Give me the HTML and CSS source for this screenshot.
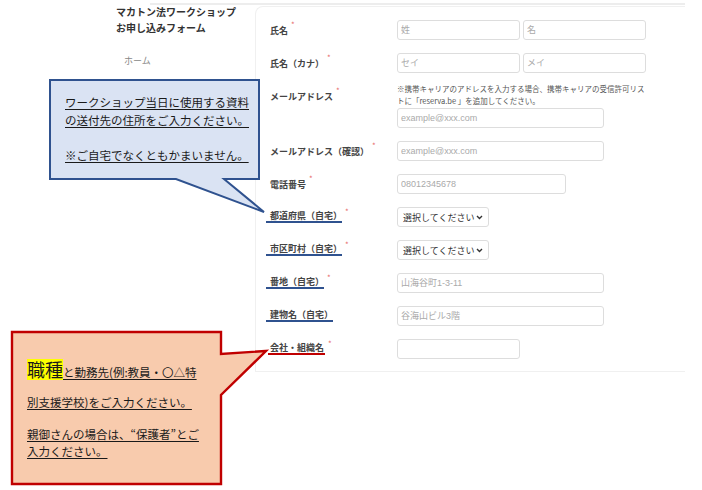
FILE: index.html
```html
<!DOCTYPE html>
<html lang="ja">
<head>
    <meta charset="UTF-8">
    <title>マカトン法ワークショップ お申し込みフォーム</title>
    <link rel="stylesheet" href="styles.css">
</head>
<body>
    <div class="topline"></div>
    <div class="page">
        <aside class="side">
            <div class="title">マカトン法ワークショップ<br>お申し込みフォーム</div>
            <div class="home">ホーム</div>
        </aside>

        <form class="card">
            <div class="row">
                <div class="lbl">氏名<span class="req">*</span></div>
                <div class="fields">
                    <input class="input w123" placeholder="姓">
                    <input class="input w123" placeholder="名">
                </div>
            </div>
            <div class="row">
                <div class="lbl">氏名（カナ）<span class="req">*</span></div>
                <div class="fields">
                    <input class="input w123" placeholder="セイ">
                    <input class="input w123" placeholder="メイ">
                </div>
            </div>
            <div class="row">
                <div class="lbl">メールアドレス<span class="req">*</span></div>
                <div>
                    <p class="hint">※携帯キャリアのアドレスを入力する場合、携帯キャリアの受信許可リス<br>トに「reserva.be 」を追加してください。</p>
                    <input class="input w207" placeholder="example@xxx.com">
                </div>
            </div>
            <div class="row">
                <div class="lbl">メールアドレス（確認）<span class="req">*</span></div>
                <div><input class="input w207" placeholder="example@xxx.com"></div>
            </div>
            <div class="row">
                <div class="lbl">電話番号<span class="req">*</span></div>
                <div><input class="input w169" placeholder="08012345678"></div>
            </div>
            <div class="row">
                <div class="lbl"><span class="mark">都道府県（自宅）</span><span class="req">*</span></div>
                <div class="select"><span>選択してください</span><svg width="7" height="5" viewBox="0 0 7 5"><path d="M1 1l2.5 2.5L6 1" fill="none" stroke="#333" stroke-width="1.4"/></svg></div>
            </div>
            <div class="row">
                <div class="lbl"><span class="mark">市区町村（自宅）</span><span class="req">*</span></div>
                <div class="select"><span>選択してください</span><svg width="7" height="5" viewBox="0 0 7 5"><path d="M1 1l2.5 2.5L6 1" fill="none" stroke="#333" stroke-width="1.4"/></svg></div>
            </div>
            <div class="row">
                <div class="lbl"><span class="mark">番地（自宅）</span><span class="req">*</span></div>
                <div><input class="input w207" placeholder="山海谷町1-3-11"></div>
            </div>
            <div class="row">
                <div class="lbl"><span class="mark">建物名（自宅）</span></div>
                <div><input class="input w207" placeholder="谷海山ビル3階"></div>
            </div>
            <div class="row">
                <div class="lbl"><span class="mark red">会社・組織名</span><span class="req">*</span></div>
                <div><input class="input w123"></div>
            </div>
        </form>
    </div>

    <!-- 吹き出し -->
    <svg class="callouts" width="702" height="490" viewBox="0 0 702 490">
        <path d="M50 80H259V179H224L264 212L176 179H50Z" fill="#dae3f3" stroke="#2f528f" stroke-width="2"/>
        <path d="M12 332H221V354L266 351L221 395V484H12Z" fill="#f8cbad" stroke="#c00000" stroke-width="2.4"/>
    </svg>
    <div class="note-blue">
        ワークショップ当日に使用する資料<br>
        の送付先の住所をご入力ください。<br>
        <br>
        ※ご自宅でなくともかまいません。
    </div>
    <div class="note-red">
        <p class="p1"><span class="hl">職種</span><u>と勤務先(例:教員・〇△特</u><br><u>別支援学校)をご入力ください。</u></p>
        <p class="p2"><u>親御さんの場合は、“保護者”とご</u><br><u>入力ください。</u></p>
    </div>
</body>
</html>
```

FILE: styles.css
```css
body{
    margin: 0;
    position: relative;
    width: 702px;
    height: 490px;
    overflow: hidden;
    background: #fff;
    font-family: "Liberation Sans", "Noto Sans CJK JP", sans-serif;
    color: #333;
}
.topline{
    margin: 3px 0 0 150px;
    width: 535px;
    height: 2px;
    background: #ededed;
}
.page{
    display: flex;
    margin-top: 1px;
}
.side{
    width: 255px;
    box-sizing: border-box;
    padding-left: 116px;
    font-family: "Noto Sans CJK JP", sans-serif;
}
.title{
    margin-top: -2px;
    font-size: 10px;
    font-weight: bold;
    line-height: 16px;
    color: #333;
    white-space: nowrap;
}
.home{
    margin: 19px 0 0 8px;
    font-size: 9px;
    line-height: 12px;
    color: #888;
}
.card{
    width: 430px;
    box-sizing: border-box;
    margin: 0;
    padding: 13px 0 12px 14px;
    border: 1px solid #f0f0f0;
    border-right: 0;
    border-top-left-radius: 8px;
}
.row{
    display: grid;
    grid-template-columns: 127px auto;
    align-items: start;
    margin-bottom: 13px;
}
.row:last-child{
    margin-bottom: 0;
}
.lbl{
    display: flex;
    align-items: center;
    height: 20px;
    font-family: "Noto Sans CJK JP", sans-serif;
    font-size: 9px;
    font-weight: bold;
    color: #444;
    white-space: nowrap;
}
.req{
    align-self: flex-start;
    margin: 1px 0 0 3px;
    font-size: 8px;
    line-height: 8px;
    font-weight: normal;
    color: #e86b6b;
}
.mark{
    margin-left: -4px;
    padding: 0 0 0 4px;
    line-height: 10px;
    border-bottom: 2px solid #2f528f;
}
.mark.red{
    margin-left: -2px;
    padding: 0 1px 0 2px;
    border-bottom-color: #c00000;
}
.fields{
    display: flex;
    gap: 3px;
}
.hint{
    margin: -3px 0 1px;
    font-family: "Noto Sans CJK JP", sans-serif;
    font-size: 7.5px;
    line-height: 12px;
    color: #555;
    white-space: nowrap;
}
.input{
    display: block;
    box-sizing: border-box;
    height: 20px;
    margin: 0;
    padding: 0 3px;
    border: 1px solid #ddd;
    border-radius: 3px;
    background: #fff;
    font: 9px "Liberation Sans", "Noto Sans CJK JP", sans-serif;
    color: #333;
}
.input::placeholder{
    color: #aaa;
}
.w123{ width: 123px; }
.w169{ width: 169px; }
.w207{ width: 207px; }
.select{
    display: flex;
    align-items: center;
    justify-content: space-between;
    box-sizing: border-box;
    width: 92px;
    height: 20px;
    padding: 0 5px 0 5px;
    border: 1px solid #ddd;
    border-radius: 3px;
    font-family: "Noto Sans CJK JP", sans-serif;
    font-size: 9px;
    color: #333;
}
.callouts{
    position: absolute;
    left: 0;
    top: 0;
    pointer-events: none;
}
.note-blue, .note-red{
    position: absolute;
    font-family: "Noto Sans CJK JP", sans-serif;
    font-size: 11.5px;
    color: #1a1a1a;
    white-space: nowrap;
}
.note-blue{
    left: 65px;
    top: 94px;
    line-height: 17.5px;
    text-decoration: underline;
    text-underline-offset: 2px;
}
.note-red{
    left: 27px;
    top: 357px;
}
.note-red p{
    margin: 0;
}
.note-red u{
    text-underline-offset: 2px;
}
.p1{
    line-height: 30px;
}
.p2{
    margin-top: 9px !important;
    line-height: 17px;
}
.hl{
    display: inline-block;
    font-size: 18px;
    line-height: 21px;
    background: #ffff00;
}
```
